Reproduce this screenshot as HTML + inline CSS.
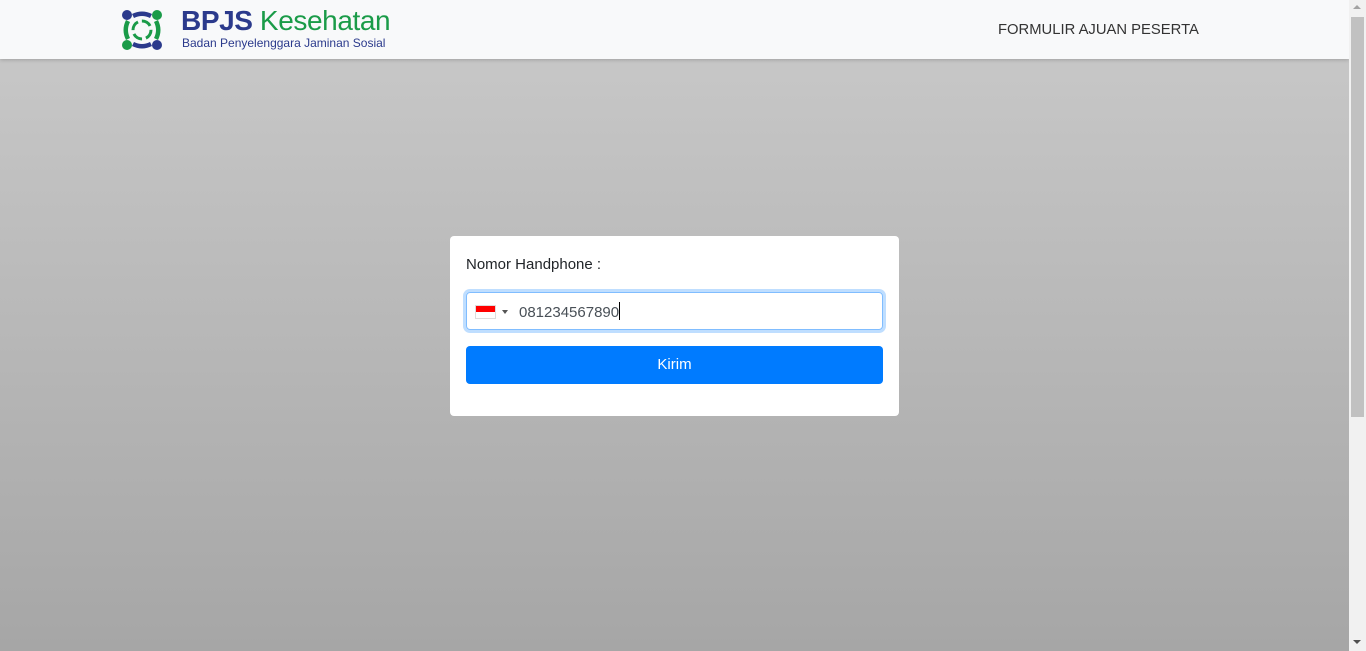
<!DOCTYPE html>
<html><head><meta charset="utf-8"><style>
*{box-sizing:border-box;margin:0;padding:0}
html,body{width:1366px;height:651px;overflow:hidden;font-family:"Liberation Sans","DejaVu Sans",sans-serif}
.main{position:absolute;left:0;top:0;width:1349px;height:651px;background:linear-gradient(#cacaca,#a6a6a6)}
.nav{position:absolute;left:0;top:0;width:1349px;height:59px;background:#f8f9fa;box-shadow:0 1px 4px rgba(0,0,0,.2)}
.sb{position:absolute;left:1349px;top:0;width:17px;height:651px;background:#f1f1f1}
.thumb{position:absolute;left:1351px;top:17px;width:13px;height:400px;background:#c1c1c1}
.card{position:absolute;left:450px;top:236px;width:449px;height:180px;background:#fff;border-radius:4px}
.lbl{position:absolute;left:16px;top:20px;font-size:15px;color:#212529}
.inp{position:absolute;left:16px;top:56px;width:417px;height:38px;border:1px solid #80bdff;border-radius:4px;box-shadow:0 0 0 3px rgba(0,123,255,.25)}
.btn{position:absolute;left:16px;top:110px;width:417px;height:38px;background:#007bff;border-radius:4px;color:#fff;font-size:15px;text-align:center;line-height:38px}
</style></head><body>
<div class="main"></div>
<div class="nav">
<svg style="position:absolute;left:120px;top:8px" width="44" height="44" viewBox="0 0 44 44">
<circle cx="7" cy="7" r="5" fill="#2b3a8c"/><circle cx="37" cy="7" r="5" fill="#1a9b48"/>
<circle cx="7" cy="37" r="5" fill="#1a9b48"/><circle cx="37" cy="37" r="5" fill="#2b3a8c"/>
<path d="M12 6 Q22 1 32 6 L30 10 Q22 6 14 10Z" fill="#2b3a8c"/>
<path d="M38 12 Q43 22 38 32 L34 30 Q38 22 34 14Z" fill="#1a9b48"/>
<path d="M32 38 Q22 43 12 38 L14 34 Q22 38 30 34Z" fill="#2b3a8c"/>
<path d="M6 32 Q1 22 6 12 L10 14 Q6 22 10 30Z" fill="#1a9b48"/>
<circle cx="22" cy="22" r="9" fill="none" stroke="#1a9b48" stroke-width="3" stroke-dasharray="10 4"/>
</svg>
<div style="position:absolute;left:181px;top:4px;font-size:28px;font-weight:bold;letter-spacing:-0.4px;line-height:34px;white-space:nowrap"><span style="color:#2b3a8c">BPJS</span><span style="color:#1a9b48;font-weight:normal"> Kesehatan</span></div>
<div style="position:absolute;left:182px;top:36px;font-size:12px;color:#2b3a8c;white-space:nowrap">Badan Penyelenggara Jaminan Sosial</div>
<div style="position:absolute;left:998px;top:22px;font-size:14.8px;color:#333">FORMULIR AJUAN PESERTA</div>
</div>
<div class="card">
<div class="lbl">Nomor Handphone :</div>
<div class="inp">
<div style="position:absolute;left:8px;top:12px;width:21px;height:14px;border:1px solid #ddd"><div style="height:6px;background:#f00"></div></div>
<div style="position:absolute;left:35px;top:17px;border-left:3px solid transparent;border-right:3px solid transparent;border-top:4px solid #555"></div>
<div style="position:absolute;left:52px;top:9px;font-size:15px;color:#495057">081234567890<span style="display:inline-block;width:1px;height:18px;background:#000;vertical-align:-3px"></span></div>
</div>
<div class="btn">Kirim</div>
</div>
<div class="sb"></div><div class="thumb"></div>
<div style="position:absolute;left:1353px;top:5px;border-left:4px solid transparent;border-right:4px solid transparent;border-bottom:4px solid #a3a3a3"></div>
<div style="position:absolute;left:1353px;top:640px;border-left:4px solid transparent;border-right:4px solid transparent;border-top:4px solid #505050"></div>
</body></html>
